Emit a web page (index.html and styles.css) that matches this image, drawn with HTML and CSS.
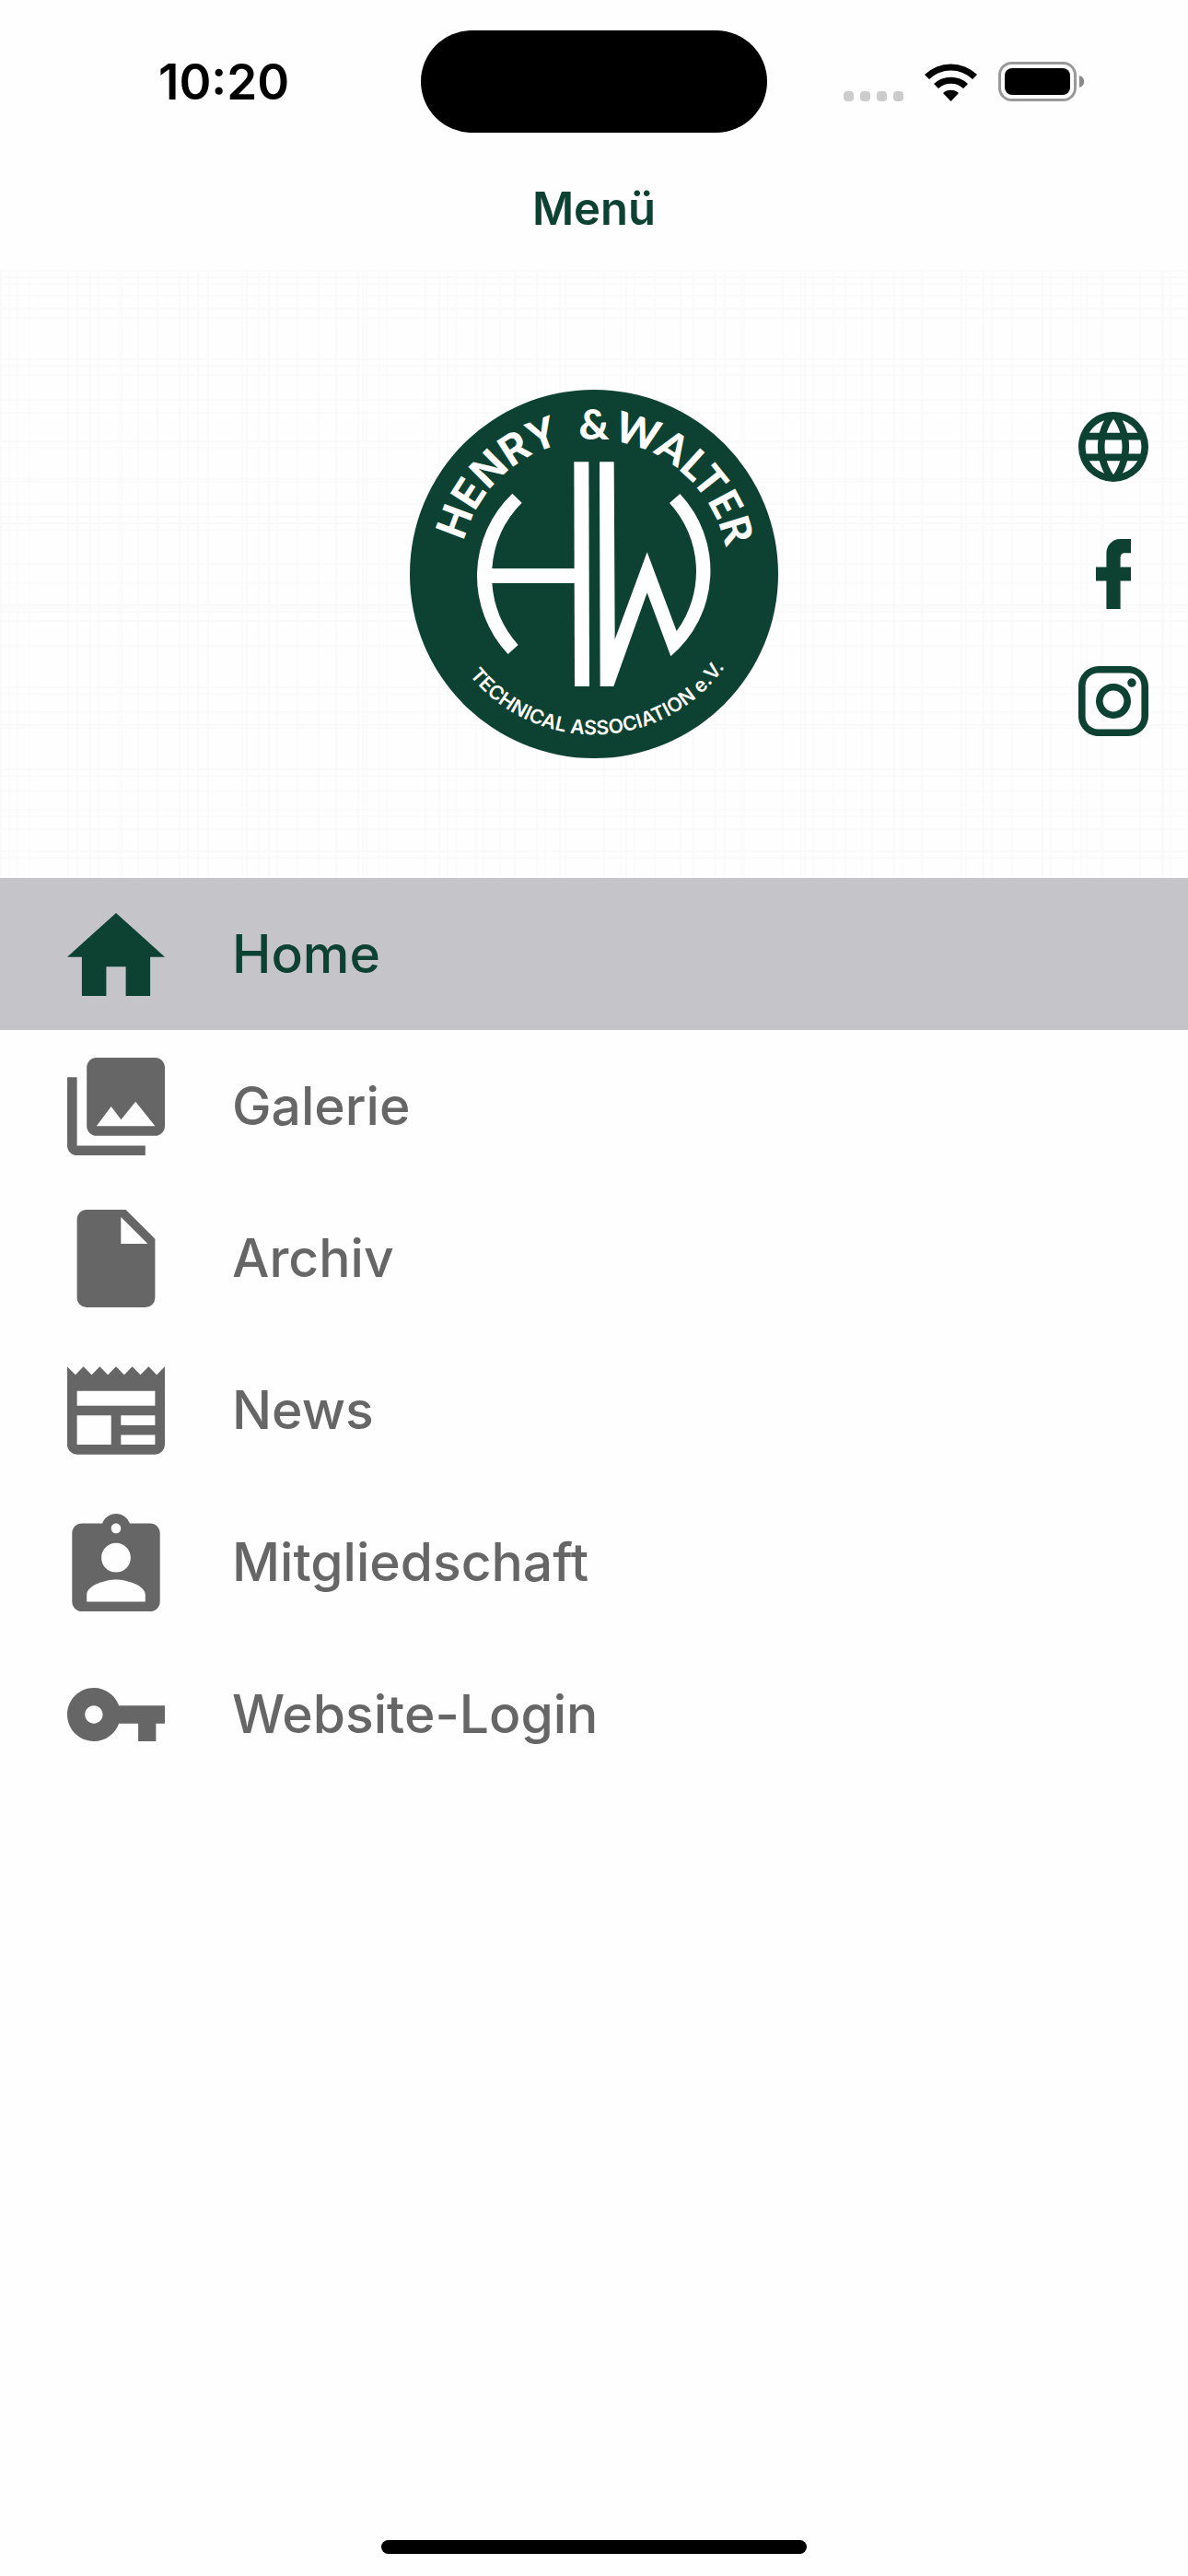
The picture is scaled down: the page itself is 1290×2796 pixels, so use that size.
FILE: index.html
```
<!DOCTYPE html>
<html lang="de">
<head>
    <meta charset="UTF-8">
    <meta name="viewport" content="width=device-width, initial-scale=1.0">
    <title>Menü</title>
    <link rel="stylesheet" href="styles.css">
</head>
<body>
    <div class="status-bar">
        <span class="time">10:20</span>
        <div class="island"></div>
        <div class="indicators">
            <div class="signal"><i></i><i></i><i></i><i></i></div>
            <svg class="wifi" viewBox="0 0 57 42" aria-hidden="true">
                <path d="M0 13a41 41 0 0 1 57 0l-5 5a34 34 0 0 0-47 0zM10 23a27 27 0 0 1 37 0l-5 5a20 20 0 0 0-27 0zM20 33a13 13 0 0 1 17 0l-8.500 9z"/>
            </svg>
            <svg class="battery" viewBox="0 0 94 43" aria-hidden="true">
                <rect x="1.500" y="1.500" width="82" height="40" rx="13" fill="none" stroke="#999" stroke-width="3"/>
                <rect x="7" y="7" width="71" height="29" rx="8"/>
                <path d="M88 15c7 2 7 11 0 13z" fill="#888"/>
            </svg>
        </div>
    </div>

    <header class="title-bar">
        <h1>Menü</h1>
    </header>

    <section class="hero">
        <svg class="logo" viewBox="48 40 1200 1200" role="img" aria-label="Henry &amp; Walter Technical Association e.V.">
            <defs>
                <path id="arc-top" d="M211 640a437 437 0 0 1 874 0"/>
                <path id="arc-bottom" d="M125 640a523 523 0 0 0 1046 0"/>
            </defs>
            <circle cx="648" cy="640" r="600" fill="#0d4131"/>
            <g fill="#fff">
                <path d="M583 275h48l2 731h-48z"/>
                <path d="M382 378A371 371 0 0 0 368 901L401 871A336 336 0 0 1 316 670H585V622H316A336 336 0 0 1 413 408z"/>
                <path d="M666 275H713L716 853 821 569 917 826A328 328 0 0 0 894 409L928 379A365 365 0 0 1 898 908L821 701 712 1006H668z"/>
                <text class="logo-name wide"><textPath href="#arc-top" startOffset="25%">HENRY</textPath></text>
                <text class="logo-name"><textPath href="#arc-top" startOffset="50%">&amp;</textPath></text>
                <text class="logo-name"><textPath href="#arc-top" startOffset="74%">WALTER</textPath></text>
                <text class="logo-sub"><textPath href="#arc-bottom" startOffset="51%">TECHNICAL ASSOCIATION e.V.</textPath></text>
            </g>
        </svg>

        <div class="social">
            <a href="#website" aria-label="Website">
                <svg viewBox="2 2 20 20"><path d="M16.360 14c.080-.660.140-1.320.140-2 0-.680-.060-1.340-.140-2h3.380c.160.640.260 1.310.260 2s-.100 1.360-.260 2m-5.150 5.560c.600-1.110 1.060-2.310 1.380-3.560h2.950a8.030 8.030 0 0 1-4.330 3.560M14.340 14H9.660c-.100-.660-.160-1.320-.160-2 0-.680.060-1.350.160-2h4.680c.090.650.160 1.320.160 2 0 .680-.070 1.340-.160 2M12 19.960c-.830-1.200-1.500-2.530-1.910-3.960h3.820c-.410 1.430-1.080 2.760-1.910 3.960M8 8H5.080A7.923 7.923 0 0 1 9.400 4.440C8.800 5.550 8.350 6.750 8 8m-2.920 8H8c.350 1.250.800 2.450 1.400 3.560A8.008 8.008 0 0 1 5.080 16m-.820-2C4.100 13.360 4 12.690 4 12s.100-1.360.260-2h3.380c-.080.660-.140 1.320-.140 2 0 .680.060 1.340.140 2M12 4.030c.830 1.200 1.500 2.540 1.910 3.970h-3.820c.410-1.430 1.080-2.770 1.910-3.970M18.920 8h-2.950a15.650 15.650 0 0 0-1.380-3.560c1.840.630 3.370 1.900 4.330 3.560M12 2C6.470 2 2 6.500 2 12a10 10 0 0 0 10 10 10 10 0 0 0 10-10A10 10 0 0 0 12 2z"/></svg>
            </a>
            <a href="#facebook" aria-label="Facebook">
                <svg viewBox="2 2 20 20"><path d="M17 2v4h-2c-.690 0-1 .810-1 1.500V10h3v4h-3v8h-4v-8H7v-4h3V6a4 4 0 0 1 4-4h3z"/></svg>
            </a>
            <a href="#instagram" aria-label="Instagram">
                <svg viewBox="2 2 20 20"><path d="M7.800 2h8.400C19.400 2 22 4.600 22 7.800v8.400a5.800 5.800 0 0 1-5.800 5.800H7.800C4.600 22 2 19.400 2 16.200V7.800A5.800 5.800 0 0 1 7.800 2m-.200 2A3.600 3.600 0 0 0 4 7.600v8.800C4 18.390 5.610 20 7.600 20h8.800a3.600 3.600 0 0 0 3.600-3.600V7.600C20 5.610 18.390 4 16.400 4H7.600m9.650 1.500a1.250 1.250 0 1 1 0 2.500 1.250 1.250 0 0 1 0-2.500M12 7a5 5 0 1 1 0 10 5 5 0 0 1 0-10m0 2a3 3 0 1 0 0 6 3 3 0 0 0 0-6z"/></svg>
            </a>
        </div>
    </section>

    <nav class="menu">
        <a class="menu-item active" href="#home">
            <svg viewBox="2 1.500 20 20"><path d="M10 20v-6h4v6h5v-8h3L12 3 2 12h3v8z"/></svg>
            <span>Home</span>
        </a>
        <a class="menu-item" href="#galerie">
            <svg viewBox="2 2 20 20"><path d="M22 16V4c0-1.100-.900-2-2-2H8c-1.100 0-2 .900-2 2v12c0 1.100.900 2 2 2h12c1.100 0 2-.900 2-2zm-11-4l2.030 2.710L16 11l4 5H8l3-4zM2 6v14c0 1.100.900 2 2 2h14v-2H4V6H2z"/></svg>
            <span>Galerie</span>
        </a>
        <a class="menu-item" href="#archiv">
            <svg viewBox="2 2 20 20"><path d="M13 9V3.500L18.500 9M6 2c-1.110 0-2 .890-2 2v16a2 2 0 0 0 2 2h12a2 2 0 0 0 2-2V8l-6-6H6z"/></svg>
            <span>Archiv</span>
        </a>
        <a class="menu-item" href="#news">
            <svg viewBox="2 2 20 20"><path d="M20 11H4V8h16m0 7h-7v-2h7m0 6h-7v-2h7m-9 2H4v-6h7m9.330-8.330L18.670 3 17 4.670 15.330 3l-1.660 1.670L12 3l-1.670 1.670L8.670 3 7 4.670 5.330 3 3.670 4.670 2 3v16a2 2 0 0 0 2 2h16a2 2 0 0 0 2-2V3l-1.670 1.670z"/></svg>
            <span>News</span>
        </a>
        <a class="menu-item" href="#mitgliedschaft">
            <svg viewBox="2 1 20 20"><path d="M19 3h-4.180C14.400 1.840 13.300 1 12 1c-1.300 0-2.400.840-2.820 2H5c-1.100 0-2 .900-2 2v14c0 1.100.900 2 2 2h14c1.100 0 2-.900 2-2V5c0-1.100-.900-2-2-2zm-7 0c.550 0 1 .450 1 1s-.450 1-1 1-1-.450-1-1 .450-1 1-1zm0 4c1.660 0 3 1.340 3 3s-1.340 3-3 3-3-1.340-3-3 1.340-3 3-3zm6 12H6v-1.400c0-2 4-3.100 6-3.100s6 1.100 6 3.100V19z"/></svg>
            <span>Mitgliedschaft</span>
        </a>
        <a class="menu-item" href="#login">
            <svg viewBox="1 1 22 22"><path d="M12.650 10C11.830 7.670 9.610 6 7 6c-3.310 0-6 2.690-6 6s2.690 6 6 6c2.610 0 4.830-1.670 5.650-4H17v4h4v-4h2v-4H12.650zM7 14c-1.100 0-2-.900-2-2s.900-2 2-2 2 .900 2 2-.900 2-2 2z"/></svg>
            <span>Website-Login</span>
        </a>
    </nav>

    <div class="home-indicator"></div>
</body>
</html>
```
FILE: styles.css
```
* {
    box-sizing: border-box;
}
body {
    margin: 0;
    min-height: 100vh;
    display: flex;
    flex-direction: column;
    background-color: #fefefe;
    color: #666;
    font-family: Inter, "Liberation Sans", sans-serif;
}
svg {
    display: block;
    fill: currentColor;
}

/* status bar */
.status-bar {
    display: grid;
    grid-template-columns: 1fr auto 1fr;
    align-items: center;
    padding: 33px 112px 17px;
    color: #000;
}
.time {
    padding-left: 60px;
    font-size: 53px;
    line-height: 60px;
    font-weight: 600;
}
.island {
    width: 376px;
    height: 111px;
    border-radius: 56px;
    background-color: #000;
}
.indicators {
    display: flex;
    justify-content: flex-end;
    align-items: flex-end;
    gap: 23px;
}
.signal {
    display: flex;
    gap: 7px;
}
.signal i {
    width: 11px;
    height: 11px;
    border-radius: 4px;
    background-color: #ccc;
}
.wifi {
    width: 57px;
    height: 42px;
}
.battery {
    width: 94px;
    height: 43px;
}

/* title */
.title-bar {
    padding: 36px 0;
    text-align: center;
    color: #0d4131;
}
.title-bar h1 {
    margin: 0;
    font-size: 49px;
    line-height: 60px;
    font-weight: 600;
}

/* logo area with linen background */
.hero {
    display: grid;
    grid-template-columns: 1fr auto 1fr;
    align-items: center;
    padding: 130px 43px;
    background-color: #fefefe;
    background-image:
        repeating-linear-gradient(90deg, #fafafa 0 2px, transparent 2px 9px, #fbfbfb 9px 11px, transparent 11px 31px, #fbfbfb 31px 33px, transparent 33px 73px, #fafafa 73px 75px, transparent 75px 97px),
        repeating-linear-gradient(90deg, #fbfbfb 0 2px, transparent 2px 18px, #fbfbfb 18px 20px, transparent 20px 83px, #fafafa 83px 85px, transparent 85px 131px),
        repeating-linear-gradient(180deg, transparent 0 7px, #fafafa 7px 9px, transparent 9px 14px, #fbfbfb 14px 16px, transparent 16px 51px, #fbfbfb 51px 53px, transparent 53px 89px),
        repeating-linear-gradient(180deg, #fbfbfb 0 2px, transparent 2px 27px, #fbfbfb 27px 29px, transparent 29px 41px, #fafafa 41px 43px, transparent 43px 113px);
}
.logo {
    grid-column: 2;
    width: 400px;
    height: 400px;
}
.logo-name {
    font-family: Lato, sans-serif;
    font-size: 136px;
    font-weight: 900;
    text-anchor: middle;
}
.logo-name.wide {
    font-family: Inter, sans-serif;
    font-weight: 700;
}
.logo-sub {
    font-family: Inter, sans-serif;
    font-size: 64px;
    font-weight: 600;
    text-anchor: middle;
}
.social {
    justify-self: end;
    display: flex;
    flex-direction: column;
    gap: 62px;
}
.social a {
    color: #0d4131;
}
.social svg {
    width: 76px;
    height: 76px;
}

/* menu */
.menu-item {
    display: flex;
    align-items: center;
    gap: 73px;
    height: 165px;
    padding: 0 73px;
    color: #666;
    font-size: 57px;
    line-height: 72px;
    font-weight: 500;
    text-decoration: none;
}
.menu-item.active {
    background-color: #c5c4c9;
    color: #0d4131;
}
.menu-item svg {
    width: 106px;
    height: 106px;
}

.home-indicator {
    width: 462px;
    height: 15px;
    margin: auto auto 24px;
    border-radius: 8px;
    background-color: #000;
}
```
